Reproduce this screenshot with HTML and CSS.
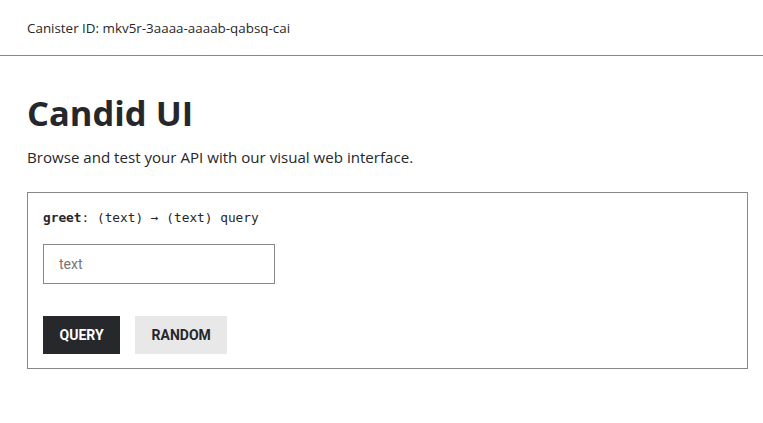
FILE: index.html
```html
<!DOCTYPE html>
<html lang="en">
<head>
<meta charset="utf-8">
<title>Candid UI</title>
<link rel="stylesheet" href="styles.css">
</head>
<body>
<header class="topbar">
  <span class="canister">Canister ID: mkv5r-3aaaa-aaaab-qabsq-cai</span>
</header>
<main class="content">
  <h1 class="title">Candid UI</h1>
  <p class="subtitle">Browse and test your API with our visual web interface.</p>
  <section class="method">
    <div class="signature"><b class="name">greet</b>: (text) → (text) query</div>
    <input class="arg" type="text" placeholder="text">
    <div class="actions">
      <button class="btn btn-dark">QUERY</button>
      <button class="btn btn-light">RANDOM</button>
    </div>
  </section>
</main>
</body>
</html>
```
FILE: styles.css
```css
* { box-sizing: border-box; }
html, body { margin: 0; padding: 0; background: #fff; }
body {
  font-family: "Open Sans", "Noto Sans", sans-serif;
  color: #26272b;
}
.topbar {
  height: 56px;
  border-bottom: 1px solid #888;
  display: flex;
  align-items: center;
  padding: 0 27px;
}
.canister { font-size: 13.4px; }
.content { padding: 0 15px 0 27px; }
.title {
  margin: 35px 0 0;
  font-size: 34.5px;
  line-height: 44px;
  font-weight: 700;
}
.subtitle {
  margin: 12px 0 0;
  font-size: 15.1px;
  line-height: 20px;
}
.method {
  margin-top: 25px;
  width: 721px;
  border: 1px solid #888;
  padding: 15px 15px 14px;
}
.signature {
  font-family: "DejaVu Sans Mono", "Liberation Mono", monospace;
  font-size: 12.8px;
  line-height: 20px;
}
.name { font-weight: 700; }
.arg {
  display: block;
  margin-top: 16px;
  width: 232px;
  height: 40px;
  border: 1px solid #888;
  padding: 0 15px;
  font-family: Roboto, sans-serif;
  font-size: 14px;
  outline: none;
}
.arg::placeholder { color: #757575; }
.actions {
  display: flex;
  gap: 15px;
  margin-top: 32px;
}
.btn {
  height: 38px;
  border: 0;
  padding: 0 16.5px;
  font-family: Roboto, sans-serif;
  font-weight: 700;
  font-size: 14px;
  cursor: pointer;
}
.btn-dark { background: #26282c; color: #fff; }
.btn-light { background: #e8e8e8; color: #26272b; }
```
